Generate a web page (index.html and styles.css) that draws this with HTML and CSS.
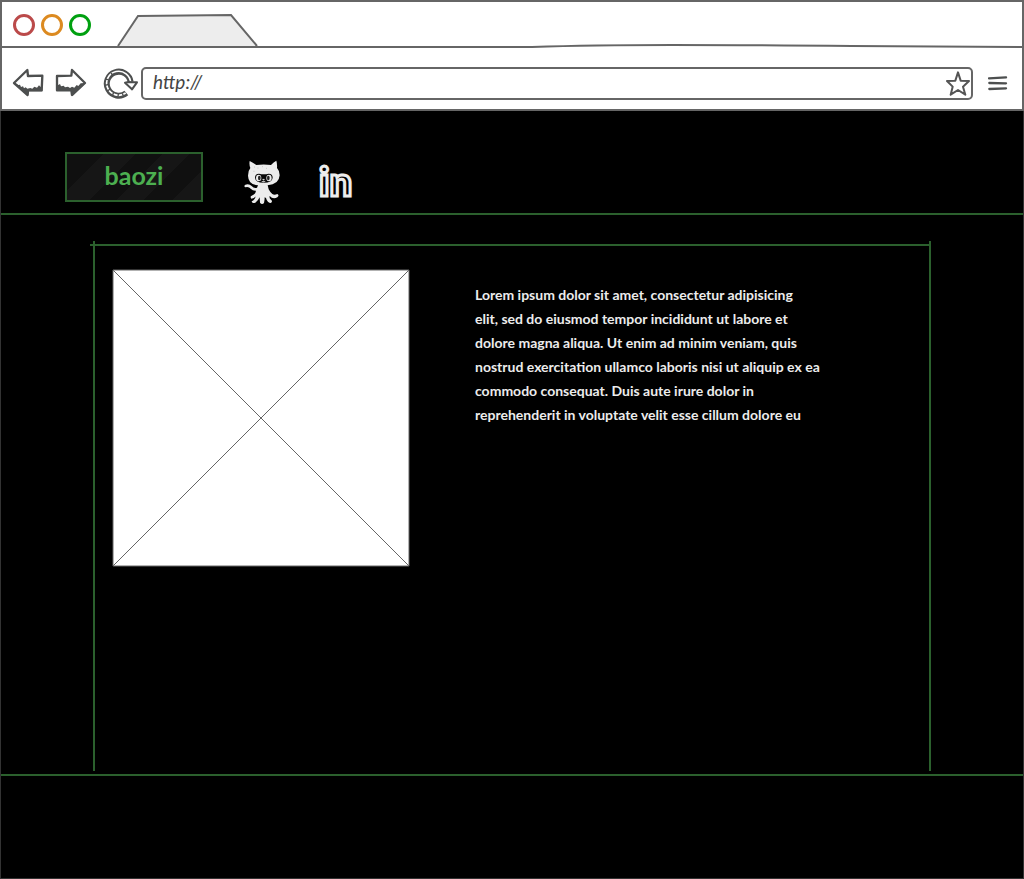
FILE: index.html
```html
<!DOCTYPE html>
<html lang="en">
<head>
<meta charset="utf-8">
<title>baozi</title>
<link rel="stylesheet" href="styles.css">
</head>
<body>
<div class="browser">
  <div class="tab-strip">
    <div class="lights"><span class="light red"></span><span class="light amber"></span><span class="light green"></span></div>
    <svg class="tab" viewBox="0 0 142 34" aria-hidden="true"><path d="M1 33 21 3 114 2 140 33" fill="#ededed" stroke="#666" stroke-width="2"/></svg>
  </div>
  <svg class="divider" viewBox="0 0 1020 4" preserveAspectRatio="none" aria-hidden="true"><path d="M0 3H530Q590 1 670 1T850 2L1020 3" fill="none" stroke="#666" stroke-width="2"/></svg>
  <div class="toolbar">
    <button class="tool" type="button" aria-label="Back">
      <svg width="32" height="30" viewBox="36 24 96 90" aria-hidden="true"><path d="M42 69 82 30 84 48 127 47 125 91 84 91 83 105Z" fill="#fff" stroke="#4d4f4f" stroke-width="7" stroke-linejoin="round"/><path d="M43 69 55 75 60 74 63 81 69 79 72 85 77 82 82 86 91 84 97 86 103 80 111 83 117 76 122 81 127 74V94H86L83 109Z" fill="#4d4f4f"/></svg>
    </button>
    <button class="tool" type="button" aria-label="Forward">
      <svg width="32" height="30" viewBox="165 24 96 90" aria-hidden="true"><path d="M171 48 214 47 216 30 255 69 216 105 214 91 171 91Z" fill="#fff" stroke="#4d4f4f" stroke-width="7" stroke-linejoin="round"/><path d="M168 69 175 75 180 72 183 79 191 77 195 82 204 80 210 84 216 80 223 83 230 75 235 78 242 70 257 69 217 109 213 93H168Z" fill="#4d4f4f"/></svg>
    </button>
    <button class="tool reload" type="button" aria-label="Reload">
      <svg width="36" height="32" viewBox="308 20 108 96" aria-hidden="true"><path d="M378 98A36 36 0 1 1 391 65" fill="none" stroke="#4d4f4f" stroke-width="18"/><path d="M376 98A36 36 0 1 1 391 68" fill="none" stroke="#fff" stroke-width="5"/><path d="M317 57 325 58M315 75 324 72M322 92 329 86M337 104 340 96M353 109 354 101M369 107 366 99M332 38 337 44" stroke="#4d4f4f" stroke-width="4"/><path d="M374 67 384 65 401 66 410 66 395 87Z" fill="#fff" stroke="#4d4f4f" stroke-width="6" stroke-linejoin="round"/></svg>
    </button>
    <div class="address">
      <input type="text" value="http://" aria-label="Address">
      <button class="tool" type="button" aria-label="Bookmark">
        <svg width="24" height="25" viewBox="48 106 72 75" aria-hidden="true"><path d="M84 110 92 135 117 136 99 153 106 177 84 163 62 177 68 153 51 136 76 135Z" fill="#fff" stroke="#555" stroke-width="6" stroke-linejoin="round"/></svg>
      </button>
    </div>
    <button class="tool menu" type="button" aria-label="Menu">
      <svg width="20" height="16" viewBox="174 118 60 48" aria-hidden="true"><path d="M177 128 228 125M178 142 228 143M178 160 228 158" stroke="#4d4f4f" stroke-width="7" stroke-linecap="round"/></svg>
    </button>
  </div>
</div>
<div class="page">
  <header class="site-header">
    <button class="brand" type="button">baozi</button>
    <a class="github" href="#" aria-label="GitHub">
      <svg width="36" height="44" viewBox="27 30 108 132" aria-hidden="true">
        <path d="M44 33Q54 38 64 45 86 42 108 45 116 36 124 32 127 42 126 54 134 62 134 76 132 104 98 106L101 118Q106 128 112 132 118 136 127 132 134 136 127 142 114 149 104 138 102 144 108 149 114 154 108 159 97 159 93 144L89 142Q89 150 87 159 81 165 75 158L74 142Q70 151 61 158 50 161 50 154 60 150 62 139 58 146 49 146 44 140 50 137 62 132 63 122 54 123 47 116 41 109 31 112 25 108 31 104 43 101 50 108 57 116 66 113L69 106Q40 104 39 77 39 62 46 54 42 44 44 33Z" fill="#ececec"/>
        <path d="M72 71Q86 75 101 71 113 71 113 83 112 98 86 98 61 98 60 83 60 71 72 71Z" fill="#080808"/>
        <ellipse cx="71" cy="84" rx="8" ry="10" fill="#ececec"/><ellipse cx="102" cy="84" rx="8" ry="10" fill="#ececec"/>
        <ellipse cx="73" cy="84" rx="4" ry="7" fill="#222"/><ellipse cx="100" cy="84" rx="4" ry="7" fill="#222"/>
        <path d="M83 88 88 88 86 91ZM80 94Q86 98 91 94" fill="#ececec" stroke="#ececec" stroke-width="2"/>
        <path d="M57 51H59M68 54H70M82 50H84M56 64H58M93 55H95" stroke="#999" stroke-width="2"/>
      </svg>
    </a>
    <a class="linkedin" href="#" aria-label="LinkedIn">in</a>
  </header>
  <main class="frame">
    <svg class="picture" viewBox="0 0 298 298" role="img" aria-label="Placeholder image"><path d="M1 1H297V297H1ZL297 297M297 1 1 297" fill="#fff" stroke="#666"/></svg>
    <p class="copy">Lorem ipsum dolor sit amet, consectetur adipisicing<br>elit, sed do eiusmod tempor incididunt ut labore et<br>dolore magna aliqua. Ut enim ad minim veniam, quis<br>nostrud exercitation ullamco laboris nisi ut aliquip ex ea<br>commodo consequat. Duis aute irure dolor in<br>reprehenderit in voluptate velit esse cillum dolore eu</p>
  </main>
  <footer class="site-footer"></footer>
</div>
</body>
</html>
```
FILE: styles.css
```css
* { box-sizing: border-box; }
body {
  margin: 0;
  min-height: 100vh;
  display: flex;
  flex-direction: column;
  background: #000;
  font-family: Lato, sans-serif;
}
.browser { background: #fff; border: 2px solid #666; }
.tab-strip { display: flex; height: 45px; padding-left: 11px; }
.lights { display: flex; gap: 6px; padding-top: 12px; }
.light { width: 22px; height: 22px; border: 3px solid; border-radius: 50%; }
.red { border-color: #bb4a4a; }
.amber { border-color: #dc8a20; }
.green { border-color: #00a010; }
.tab { width: 142px; height: 34px; margin: 11px 0 0 26px; }
.divider { display: block; width: 100%; height: 4px; margin-top: -3px; }
.toolbar { display: flex; align-items: center; padding: 19px 14px 9px 10px; }
.tool {
  display: flex;
  flex: none;
  margin-bottom: 1px;
  padding: 0;
  border: 0;
  background: none;
  cursor: pointer;
}
.tool + .tool { margin-left: 11px; }
.tool + .reload { margin-left: 16px; }
.address {
  flex: 1;
  display: flex;
  align-items: center;
  height: 33px;
  margin: 0 15px 0 2px;
  padding: 0 1px 0 10px;
  border: 2px solid #666;
  border-radius: 5px;
}
.address input {
  flex: 1;
  min-width: 0;
  padding: 0 0 4px;
  border: 0;
  outline: 0;
  background: none;
  color: #444;
  font: italic 19px Lato, sans-serif;
}
.page {
  flex: 1;
  display: flex;
  flex-direction: column;
  border: 1px solid #333;
  border-top: 0;
}
.site-header {
  display: flex;
  align-items: flex-start;
  height: 104px;
  padding: 41px 64px 0;
  border-bottom: 2px solid #2b602d;
}
.brand {
  width: 138px;
  height: 50px;
  padding: 0 0 4px;
  border: 2px solid #2b602d;
  background: linear-gradient(135deg, #101010 20%, #161616 20% 38%, #101010 38% 53%, #161616 53% 68%, #101010 68% 84%, #161616 84%);
  color: #4caf50;
  font: bold 25px Lato, sans-serif;
  cursor: pointer;
}
.github { margin: 8px 0 0 41px; line-height: 0; }
.linkedin {
  margin: 7px 0 0 39px;
  color: #000;
  font-size: 40px;
  font-weight: 900;
  line-height: 44px;
  text-decoration: none;
  -webkit-text-stroke: 3px #ececec;
}
.frame {
  position: relative;
  display: flex;
  align-items: flex-start;
  gap: 65px;
  min-height: 530px;
  margin: 26px 92px 3px;
  padding: 28px 17px 0;
  border: solid #2b602d;
  border-width: 0 2px;
}
.frame::before {
  content: "";
  position: absolute;
  top: 3px;
  left: -5px;
  right: 0;
  height: 2px;
  background: #2b602d;
}
.picture { flex: 0 1 298px; min-width: 0; }
.copy {
  margin: 14px 0 0;
  color: #ececec;
  font-size: 14px;
  font-weight: bold;
  line-height: 24px;
}
.site-footer { flex: 1; min-height: 104px; border-top: 2px solid #2b602d; }
```
